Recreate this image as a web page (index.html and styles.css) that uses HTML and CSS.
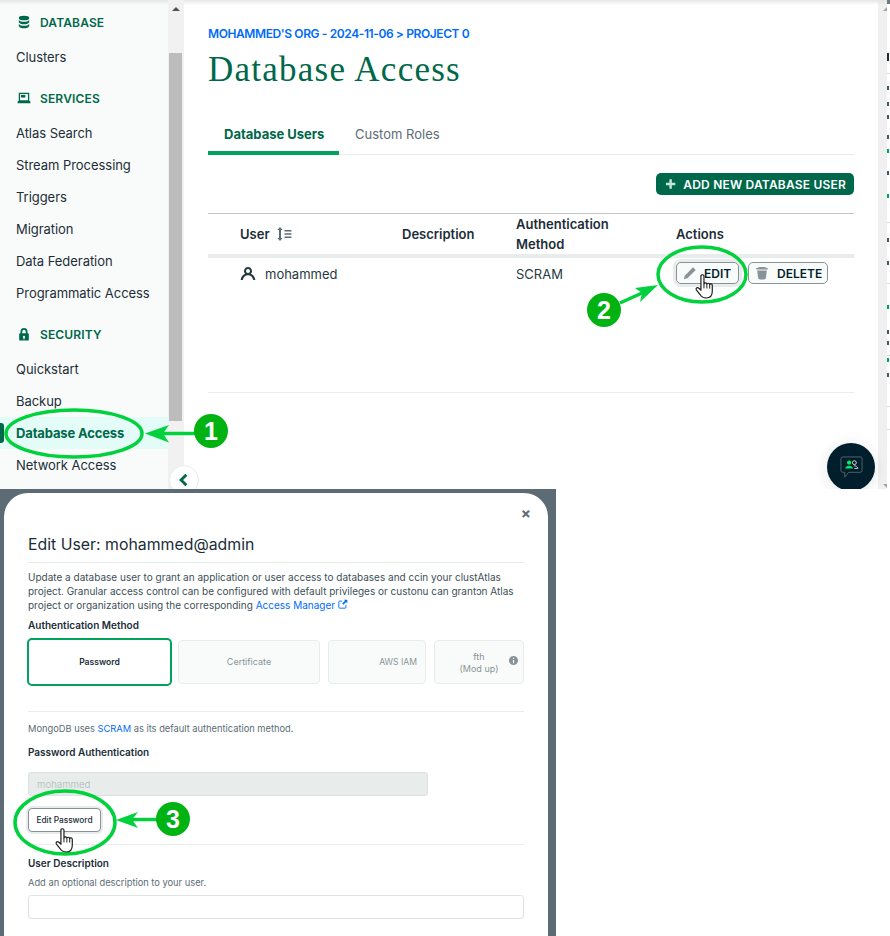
FILE: index.html
```html
<!DOCTYPE html>
<html lang="en">
<head>
    <meta charset="UTF-8">
    <meta name="viewport" content="width=device-width, initial-scale=1.0">
    <title>Database Access</title>
    <link rel="stylesheet" href="styles.css">
</head>
<body>
    <div class="page">
        <!-- top capture: atlas page -->
        <section class="atlas">
            <aside class="sidebar">
                <div class="nav-head">
                    <svg class="nav-icon" viewBox="0 0 16 16"><ellipse cx="8" cy="3.4" rx="6" ry="2.6"/><path d="M2 5.6c1 1.5 3.400 2.200 6 2.200s5-.7 6-2.200v2.400c-.6 1.700-3.200 2.600-6 2.600s-5.400-.9-6-2.600z"/><path d="M2 10.200c1 1.500 3.400 2.200 6 2.200s5-.7 6-2.200v2.400c-.6 1.700-3.200 2.600-6 2.600s-5.400-.9-6-2.600z"/></svg>
                    DATABASE
                </div>
                <a class="nav-item">Clusters</a>

                <div class="nav-head section">
                    <svg class="nav-icon" viewBox="0 0 16 16"><path fill-rule="evenodd" d="M2 2h12v9.500h1l.5 2.500H.5l.5-2.500h1zM3.500 3.500v7h9v-7z"/><rect x="4.500" y="4.500" width="5" height="3"/></svg>
                    SERVICES
                </div>
                <a class="nav-item">Atlas Search</a>
                <a class="nav-item">Stream Processing</a>
                <a class="nav-item">Triggers</a>
                <a class="nav-item">Migration</a>
                <a class="nav-item">Data Federation</a>
                <a class="nav-item">Programmatic Access</a>

                <div class="nav-head section">
                    <svg class="nav-icon" viewBox="0 0 16 16"><path fill-rule="evenodd" d="M4 7V5a4 4 0 0 1 8 0v2h.5a1 1 0 0 1 1 1v6.500a1 1 0 0 1-1 1h-9a1 1 0 0 1-1-1V8a1 1 0 0 1 1-1zm2 0h4V5a2 2 0 0 0-4 0zm2 3a1.300 1.300 0 0 0-.7 2.400V14h1.400v-1.600A1.300 1.300 0 0 0 8 10z"/></svg>
                    SECURITY
                </div>
                <a class="nav-item">Quickstart</a>
                <a class="nav-item">Backup</a>
                <a class="nav-item active">Database Access</a>
                <a class="nav-item">Network Access</a>
            </aside>

            <div class="side-scroll">
                <div class="scroll-up"></div>
                <div class="side-thumb"></div>
            </div>

            <main class="content">
                <div class="crumbs">MOHAMMED'S ORG - 2024-11-06 &gt; PROJECT 0</div>
                <h1 class="page-title">Database Access</h1>

                <div class="tabs">
                    <div class="tab active">Database Users</div>
                    <div class="tab">Custom Roles</div>
                </div>

                <div class="toolbar">
                    <button class="btn-add">
                        <svg class="plus" viewBox="0 0 12 12"><path d="M4.700 1h2.600v3.700H11v2.600H7.300V11H4.700V7.300H1V4.700h3.700z"/></svg>
                        ADD NEW DATABASE USER
                    </button>
                </div>

                <div class="users-table">
                    <div class="table-head">
                        <div class="col-user">User
                            <svg class="sort-icon" viewBox="0 0 16 16"><path d="M4 1l2.600 3H5v8h1.600L4 15l-2.600-3H3V4H1.400z"/><path d="M8.500 4h7v1.600h-7zM8.500 7.200h7v1.600h-7zM8.500 10.400h7V12h-7z"/></svg>
                        </div>
                        <div>Description</div>
                        <div>Authentication<br>Method</div>
                        <div>Actions</div>
                    </div>
                    <div class="table-row">
                        <div class="col-user">
                            <svg class="user-icon" viewBox="0 0 16 16"><path fill-rule="evenodd" d="M8 1a4 4 0 0 1 2.900 6.800c1.900.7 3.500 2.400 4.100 4.700l.3 1.500h-2.100l-.3-1.100C12.300 10.700 10.300 9.200 8 9.200s-4.300 1.500-4.900 3.700L2.800 14H.7l.3-1.500c.6-2.300 2.200-4 4.100-4.700A4 4 0 0 1 8 1zm0 2a2 2 0 1 0 0 4 2 2 0 0 0 0-4z"/></svg>
                            mohammed
                        </div>
                        <div></div>
                        <div>SCRAM</div>
                        <div class="row-actions">
                            <button class="btn-row focus">
                                <svg class="btn-icon" viewBox="0 0 16 16"><path d="M11.500 1.500l3 3L5 14l-4 1 1-4z"/></svg>
                                EDIT
                            </button>
                            <button class="btn-row">
                                <svg class="btn-icon" viewBox="0 0 16 16"><path d="M1.500 2.500c2-1 4-1.500 6.500-1.500s4.500.5 6.500 1.500V4h-13z"/><path d="M2.500 5h11l-1.200 9.500c-1.300.7-2.800 1-4.300 1s-3-.3-4.300-1z"/></svg>
                                DELETE
                            </button>
                        </div>
                    </div>
                </div>
                <div class="table-end"></div>
            </main>

            <div class="page-scroll">
                <div class="page-arrow up"></div>
                <div class="page-arrow down"></div>
            </div>
            <div class="next-window">
                <i class="corner"></i>
                <i class="dk t53"></i><i class="rule t73"></i><i class="dk t87"></i><i class="dk t103"></i>
                <i class="dk t117"></i><i class="dk t137"></i><i class="gr t150"></i><i class="dk t173"></i>
                <i class="gr t196"></i><i class="rule t222"></i><i class="dk t240"></i><i class="dk t263"></i>
                <i class="rule t283"></i><i class="gr t307"></i><i class="dk t332"></i><i class="dk t343"></i>
                <i class="rule t355"></i><i class="gr t360"></i><i class="dk t375"></i><i class="rule t406"></i>
                <i class="rule t429"></i>
            </div>

            <button class="collapse">
                <svg viewBox="0 0 12 12"><path d="M8 1.500L3.500 6 8 10.500" fill="none" stroke="#00684a" stroke-width="2.400"/></svg>
            </button>
            <button class="chat">
                <svg viewBox="0 0 26 26"><path d="M4 2h18a2 2 0 0 1 2 2v12a2 2 0 0 1-2 2H10l-4 5v-5H4a2 2 0 0 1-2-2V4a2 2 0 0 1 2-2z" fill="none" stroke="#5c6c75" stroke-width=".9"/><circle cx="10.500" cy="8" r="2.200" fill="#00ed64"/><path d="M6.500 14c.3-2 2-2.800 4-2.800s3.700.8 4 2.800z" fill="#00ed64"/><circle cx="16" cy="8" r="2" fill="none" stroke="#e8edeb" stroke-width=".9"/><path d="M15.500 11.200c2 0 3.700.7 4.100 2.800H16" fill="none" stroke="#e8edeb" stroke-width=".9"/></svg>
            </button>
        </section>

        <!-- bottom capture: edit user modal -->
        <section class="backdrop">
            <div class="modal">
                <div class="modal-close">×</div>
                <h2 class="modal-title">Edit User: mohammed@admin</h2>
                <p class="modal-intro">Update a database user to grant an application or user access to databases and ccin your clustAtlas<br>project. Granular access control can be configured with default privileges or custonu can grantɔn Atlas<br>project or organization using the corresponding <a class="link">Access Manager</a>
                    <svg class="ext-icon" viewBox="0 0 12 12"><path d="M5 2.500H2A1 1 0 0 0 1 3.500V10a1 1 0 0 0 1 1h6.500a1 1 0 0 0 1-1V7" fill="none" stroke="#016bf8" stroke-width="1.100"/><path d="M7 .8h4.200V5L9.800 3.600 6.500 6.900 5.100 5.500 8.400 2.200z" fill="#016bf8"/></svg>
                </p>
                <div class="field-label">Authentication Method</div>
                <div class="method-cards">
                    <div class="method selected">Password</div>
                    <div class="method cert">Certificate</div>
                    <div class="method aws">AWS IAM</div>
                    <div class="method ldap">fth<br>(Mod up)
                        <svg class="info-icon" viewBox="0 0 16 16"><path fill-rule="evenodd" d="M8 0a8 8 0 1 1 0 16A8 8 0 0 1 8 0zM7 3v2.400h2V3zM7 7v6h2V7z"/></svg>
                    </div>
                </div>
                <hr class="rule-line first">
                <p class="help-text">MongoDB uses <a class="link">SCRAM</a> as its default authentication method.</p>
                <div class="field-label pw">Password Authentication</div>
                <input class="pw-input" value="mohammed" disabled>
                <button class="btn-pw">Edit Password</button>
                <hr class="rule-line second">
                <div class="field-label desc">User Description</div>
                <p class="help-text small">Add an optional description to your user.</p>
                <input class="desc-input">
            </div>
        </section>

        <!-- callouts drawn on top of both captures -->
        <svg class="callouts" viewBox="0 0 890 936">
            <defs>
                <g id="hand">
                    <path d="M5.500 1.800c0-1.500 2.800-1.500 2.800 0v7.500c.1-1.500 2.600-1.500 2.700.2.200-1.300 2.500-1.300 2.600.4.300-1.100 2.400-1 2.400.6v5.500c0 3.400-1.700 6.200-5.500 6.200-3 0-4.400-.9-5.800-3.200L1.200 14.600c-.8-1.300.8-2.700 2.100-1.600l2.200 2z" fill="#fff" stroke="#1c1c1c" stroke-width="1.100" stroke-linejoin="round"/>
                    <path d="M8.300 9.300v4M11 9.600v3.800M13.600 10v3.500" fill="none" stroke="#1c1c1c" stroke-width=".9"/>
                </g>
            </defs>
            <g fill="none" stroke="#00d13c" stroke-width="3.500">
                <ellipse cx="74" cy="433.500" rx="68" ry="23.500"/>
                <ellipse cx="702" cy="274.500" rx="44" ry="27.500"/>
                <ellipse cx="65" cy="822.500" rx="50" ry="31.500"/>
                <path d="M163 433.500H196"/>
                <path d="M130 819.500H158"/>
                <path d="M620 303L642 293"/>
            </g>
            <g fill="#00d13c">
                <path d="M145 433.500l24-8.500-6 8.500 6 9z"/>
                <path d="M116 820l22-8-6 7.500 6 8.500z"/>
                <path d="M658 285l-23 3 7 5-2 9z"/>
            </g>
            <g fill="#00b312">
                <circle cx="211" cy="431" r="17"/>
                <circle cx="604" cy="310" r="17"/>
                <circle cx="173" cy="819" r="17"/>
            </g>
            <g class="badge-num" text-anchor="middle">
                <text x="211" y="440">1</text>
                <text x="604" y="319">2</text>
                <text x="173" y="828">3</text>
            </g>
            <use href="#hand" transform="translate(695 274) scale(1.08)"/>
            <use href="#hand" transform="translate(55 828) scale(1.08)"/>
        </svg>
    </div>
</body>
</html>
```

FILE: styles.css
```css
* {
    box-sizing: border-box;
}
body {
    margin: 0;
    background: #fff;
    color: #001e2b;
    font-family: "Inter", "Liberation Sans", sans-serif;
    font-size: 13px;
}
.page {
    position: relative;
    width: 890px;
    height: 936px;
    overflow: hidden;
}
button {
    font-family: inherit;
    cursor: pointer;
}
p, h1, h2 {
    margin: 0;
    font-weight: 400;
}

/* top capture */
.atlas {
    position: relative;
    display: flex;
    height: 489px;
    overflow: hidden;
}
.atlas::before {
    content: "";
    position: absolute;
    left: 0;
    right: 0;
    top: 0;
    height: 5px;
    background: linear-gradient(#e4e6e6, rgba(255, 255, 255, 0));
}
.sidebar {
    width: 168px;
    padding-top: 6px;
    background: #f9fbfa;
}
.nav-head {
    display: flex;
    align-items: center;
    gap: 9px;
    height: 32px;
    margin-bottom: 3px;
    padding-left: 17px;
    color: #00684a;
    font-size: 12px;
    font-weight: 600;
    letter-spacing: .15px;
}
.nav-head.section {
    margin-top: 9px;
}
.nav-icon {
    width: 14px;
    height: 14px;
    fill: #00684a;
}
.nav-item {
    display: flex;
    align-items: center;
    height: 32px;
    padding-left: 16px;
    color: #1c2d38;
    font-size: 13px;
    letter-spacing: -.05px;
}
.nav-item.active {
    position: relative;
    background: #e3fcf7;
    color: #00684a;
    font-weight: 700;
    letter-spacing: -.15px;
}
.nav-item.active::before {
    content: "";
    position: absolute;
    left: 0;
    top: 6px;
    width: 4px;
    height: 20px;
    border-radius: 0 3px 3px 0;
    background: #00684a;
}
.side-scroll {
    position: relative;
    width: 16px;
    padding: 0 2px 0 1px;
    background: #f1f1f1;
}
.scroll-up {
    width: 0;
    height: 0;
    margin: 7px 0 0 3px;
    border: 4px solid transparent;
    border-top: 0;
    border-bottom: 4px solid #505050;
}
.side-thumb {
    height: 368px;
    margin-top: 42px;
    background: #bcbcbc;
}
.content {
    width: 694px;
    padding: 26px 24px 0;
    background: #fff;
}
.crumbs {
    color: #016bf8;
    font-size: 12px;
    font-weight: 600;
    line-height: 16px;
    letter-spacing: -.4px;
    white-space: nowrap;
}
.page-title {
    margin-top: 7px;
    color: #00684a;
    font-family: "Liberation Serif", serif;
    font-size: 35px;
    line-height: 42px;
    letter-spacing: 1.25px;
}
.tabs {
    display: flex;
    height: 40px;
    margin-top: 24px;
    border-bottom: 1px solid #e8edeb;
}
.tab {
    height: 40px;
    padding: 0 16px;
    color: #5c6c75;
    font-size: 13px;
    line-height: 39px;
    font-weight: 400;
}
.tab.active {
    width: 131px;
    border-bottom: 4px solid #00a35c;
    border-radius: 4px 4px 0 0;
    color: #00684a;
    font-weight: 700;
    white-space: nowrap;
}
.toolbar {
    display: flex;
    justify-content: flex-end;
    margin-top: 18px;
}
.btn-add {
    display: flex;
    align-items: center;
    gap: 7px;
    width: 198px;
    height: 22px;
    padding: 0 8px 0 9px;
    border: 0;
    border-radius: 5px;
    background: #00684a;
    color: #fff;
    font-size: 12px;
    font-weight: 600;
    letter-spacing: .2px;
    white-space: nowrap;
}
.plus {
    width: 12px;
    height: 12px;
    fill: #c3e7d8;
}
.users-table {
    margin-top: 18px;
    border-top: 1px solid #c1c7c6;
}
.table-head, .table-row {
    display: grid;
    grid-template-columns: 194px 114px 160px 1fr;
    align-items: center;
}
.table-head {
    height: 40px;
    border-bottom: 4px solid #e8edeb;
    box-sizing: content-box;
    color: #1c2d38;
    font-size: 13px;
    font-weight: 600;
    line-height: 20px;
}
.col-user {
    display: flex;
    align-items: center;
    padding-left: 32px;
}
.sort-icon {
    width: 16px;
    height: 16px;
    margin-left: 6px;
    fill: #5c6c75;
}
.table-row {
    height: 32px;
    color: #28393f;
    font-size: 13px;
}
.user-icon {
    width: 16px;
    height: 16px;
    margin-right: 9px;
    fill: #28393f;
}
.row-actions {
    display: flex;
    gap: 9px;
    padding-bottom: 2px;
}
.btn-row {
    display: flex;
    align-items: center;
    gap: 8px;
    height: 22px;
    padding: 0 6px;
    border: 1px solid #889397;
    border-radius: 5px;
    background: #f9fbfa;
    color: #001e2b;
    font-size: 12px;
    font-weight: 600;
    white-space: nowrap;
}
.btn-row + .btn-row {
    width: 80px;
}
.btn-row.focus {
    width: 63px;
    gap: 7px;
    box-shadow: 0 0 0 3px #e8edeb;
}
.btn-icon {
    flex: none;
    width: 14px;
    height: 14px;
    fill: #889397;
}
.table-end {
    height: 1px;
    margin-top: 102px;
    background: #e8edeb;
}
.page-scroll {
    display: flex;
    flex-direction: column;
    justify-content: space-between;
    width: 9px;
    padding: 7px 0 1px 5px;
    background: #f0f0f0;
}
.page-arrow {
    width: 0;
    height: 0;
    border-left: 4px solid transparent;
}
.page-arrow.up {
    border-bottom: 4px solid #a3a3a3;
}
.page-arrow.down {
    border-top: 4px solid #a3a3a3;
}
.next-window {
    position: relative;
    width: 3px;
    background: #fff;
}
.next-window i {
    position: absolute;
    left: 0;
    width: 2px;
    height: 4px;
}
.next-window .corner {
    top: 0;
    width: 3px;
    background: #6f7a80;
}
.next-window .dk {
    background: #4a555b;
}
.next-window .gr {
    background: #00a35c;
}
.next-window .rule {
    width: 3px;
    height: 1px;
    background: #dcdfe0;
}
.next-window .t53 { top: 53px; height: 8px; background: #1c2d38; }
.t73 { top: 73px; }
.t87 { top: 86px; }
.t103 { top: 102px; }
.t117 { top: 115px; }
.t137 { top: 135px; }
.t150 { top: 149px; }
.t173 { top: 171px; }
.t196 { top: 194px; }
.t222 { top: 222px; }
.t240 { top: 238px; }
.t263 { top: 261px; }
.t283 { top: 283px; }
.t307 { top: 305px; }
.t332 { top: 330px; }
.t343 { top: 341px; }
.t355 { top: 355px; }
.t360 { top: 358px; }
.t375 { top: 373px; }
.t406 { top: 406px; }
.t429 { top: 429px; }
.collapse {
    position: absolute;
    left: 169px;
    top: 465px;
    display: flex;
    align-items: center;
    justify-content: center;
    width: 30px;
    height: 30px;
    padding: 0;
    border: 1px solid #e8edeb;
    border-radius: 50%;
    background: #fff;
}
.collapse svg {
    width: 14px;
    height: 14px;
}
.chat {
    position: absolute;
    left: 827px;
    top: 443px;
    display: flex;
    align-items: center;
    justify-content: center;
    width: 48px;
    height: 48px;
    padding: 0;
    border: 0;
    border-radius: 50%;
    background: #001e2b;
    box-shadow: 0 2px 14px rgba(0, 30, 43, .12);
}
.chat svg {
    width: 25px;
    height: 25px;
}

/* bottom capture */
.backdrop {
    width: 556px;
    height: 447px;
    padding: 4px 8px 0 4px;
    background: #5d6c74;
    overflow: hidden;
}
.modal {
    position: relative;
    height: 480px;
    padding: 39px 24px 0;
    background: #fff;
    border-radius: 24px 24px 0 0;
    font-size: 10px;
    color: #3d4f58;
}
.modal-close {
    position: absolute;
    right: 17px;
    top: 12px;
    color: #5c6c75;
    font-size: 15px;
    font-weight: 700;
    line-height: 18px;
}
.modal-title {
    padding-bottom: 4px;
    border-bottom: 1px solid #e8edeb;
    color: #1c2d38;
    font-size: 15.850px;
    line-height: 26px;
    white-space: nowrap;
}
.modal-intro {
    margin-top: 7px;
    color: #3d4f58;
    line-height: 14px;
    white-space: nowrap;
}
.link {
    color: #016bf8;
}
.ext-icon {
    width: 10px;
    height: 10px;
}
.field-label {
    color: #1c2d38;
    font-size: 10px;
    font-weight: 600;
    line-height: 14px;
}
.modal-intro + .field-label {
    margin-top: 6px;
}
.method-cards {
    display: flex;
    align-items: center;
    gap: 8px;
    margin-top: 6px;
}
.method {
    position: relative;
    display: flex;
    align-items: center;
    justify-content: center;
    width: 98px;
    height: 44px;
    border: 1px solid #e8edeb;
    border-radius: 4px;
    background: #f9fbfa;
    color: #889397;
    font-size: 9px;
    line-height: 12px;
    text-align: center;
}
.method.selected {
    width: 145px;
    height: 48px;
    margin: 0 -2px 0 -1px;
    border: 2px solid #00a35c;
    border-radius: 5px;
    background: #fff;
    color: #1c2d38;
    font-size: 8.600px;
    font-weight: 600;
}
.method.cert {
    width: 142px;
}
.method.aws {
    justify-content: flex-end;
    padding-right: 8px;
    font-size: 8.600px;
}
.method.ldap {
    width: 90px;
    padding-top: 2px;
}
.info-icon {
    position: absolute;
    right: 5px;
    top: 15px;
    width: 9px;
    height: 9px;
    fill: #889397;
}
.rule-line {
    height: 1px;
    margin: 0;
    border: 0;
    background: #e8edeb;
}
.rule-line.first {
    margin-top: 25px;
}
.help-text {
    margin-top: 10px;
    color: #5c6c75;
    font-size: 9.300px;
    line-height: 14px;
}
.field-label.pw {
    margin-top: 9px;
}
.pw-input, .desc-input {
    display: block;
    height: 24px;
    padding: 0 8px;
    border: 1px solid #e8edeb;
    border-radius: 3px;
    font-family: inherit;
    font-size: 9.600px;
}
.pw-input {
    width: 400px;
    margin-top: 13px;
    background: #e8edeb;
    border-color: #dde2e1;
    color: #b8c4c2;
}
.btn-pw {
    display: block;
    width: 73px;
    height: 24px;
    margin-top: 12px;
    padding: 0;
    border: 1px solid #889397;
    border-radius: 4px;
    background: #fff;
    color: #1c2d38;
    font-size: 8.300px;
    font-weight: 500;
    box-shadow: 0 0 0 2px #e8edeb;
    white-space: nowrap;
}
.rule-line.second {
    margin-top: 12px;
}
.field-label.desc {
    margin-top: 11px;
}
.help-text.small {
    margin-top: 6px;
}
.desc-input {
    width: 496px;
    margin-top: 5px;
    border-color: #dfe3e3;
    background: #fff;
}

/* callouts */
.callouts {
    position: absolute;
    left: 0;
    top: 0;
    width: 890px;
    height: 936px;
    pointer-events: none;
}
.badge-num text {
    fill: #fff;
    font-family: "Liberation Sans", sans-serif;
    font-size: 25px;
    font-weight: 700;
}
```
